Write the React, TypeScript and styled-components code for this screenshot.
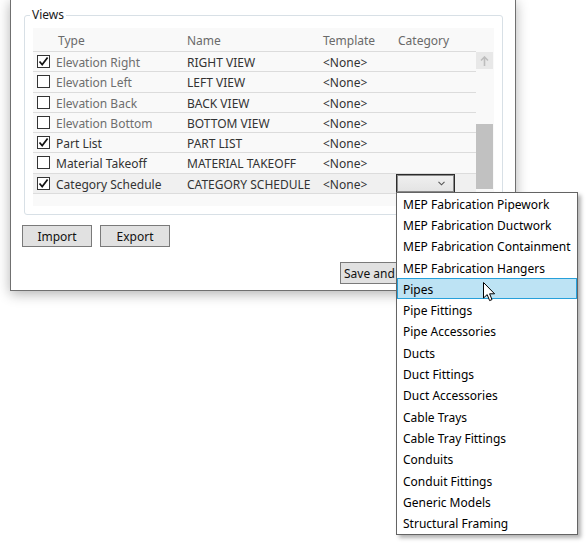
import React from 'react';
import styled, { createGlobalStyle } from 'styled-components';

const Global = createGlobalStyle`
  html, body { margin: 0; padding: 0; background: #fff; }
  body { font-family: "Noto Sans", "Segoe UI", sans-serif; font-size: 12px; color: #000; }
`;

const Page = styled.div`
  position: relative;
  width: 587px;
  height: 544px;
  overflow: hidden;
  background: #fff;
`;

const Dialog = styled.div`
  box-sizing: border-box;
  margin-left: 10px;
  margin-top: -1px;
  width: 506px;
  height: 292px;
  border: 1px solid #707070;
  background: #fff;
  box-shadow: 0 3px 12px rgba(0, 0, 0, 0.3);
  padding: 8px 12px 0 13px;
  display: flex;
  flex-direction: column;
`;

const GroupBox = styled.div`
  position: relative;
  margin-top: 7px;
  border: 1px solid #d8e0e6;
  border-radius: 3px;
  padding: 12px 8px 8px 8px;
`;

const Legend = styled.span`
  position: absolute;
  top: -9px;
  left: 5px;
  padding: 0 2px;
  background: #fff;
  line-height: 16px;
  color: #1a1a1a;
`;

const TableArea = styled.div`
  display: flex;
  height: 178px;
  background: #f9f9f9;
`;

const Grid = styled.div`
  width: 443px;
  display: grid;
  grid-template-columns: 23px 131px 136px 75px 78px;
  grid-auto-rows: min-content;
  align-content: start;
`;

const HeadCell = styled.div<{ $shift?: number }>`
  box-sizing: border-box;
  height: 24px;
  padding-top: 2px;
  border-bottom: 1px solid #dcdcdc;
  display: flex;
  align-items: center;
  padding-left: ${(p) => p.$shift ?? 0}px;
  color: #6a6a6a;
`;

const Cell = styled.div<{ $muted?: boolean; $selected?: boolean }>`
  box-sizing: border-box;
  height: 20.25px;
  padding-top: 2px;
  border-bottom: 1px solid #dcdcdc;
  display: flex;
  align-items: center;
  white-space: nowrap;
  color: ${(p) => (p.$muted ? '#6e6e6e' : '#333')};
  background: ${(p) => (p.$selected ? '#f0f0f0' : 'transparent')};
`;

const CheckCell = styled(Cell)`
  padding-left: 4px;
  padding-top: 0;
`;

const Box = styled.span`
  box-sizing: border-box;
  width: 13px;
  height: 13px;
  border: 1px solid #333;
  background: #fff;
  display: flex;
  align-items: center;
  justify-content: center;
`;

const ComboCell = styled(Cell)`
  padding-top: 0;
  align-items: flex-end;
`;

const Combo = styled.div`
  box-sizing: border-box;
  width: 59px;
  height: 19px;
  margin-left: -2px;
  border: 1px solid #2b2b2b;
  box-shadow: inset 0 0 0 1px #8a8a8a;
  background: linear-gradient(#f0f0f0, #e3e3e3);
  display: flex;
  align-items: center;
  justify-content: flex-end;
  padding-right: 9px;
`;

const ScrollCol = styled.div`
  width: 17px;
  display: flex;
  flex-direction: column;
`;

const ScrollSpacer = styled.div`
  height: 24px;
`;

const ScrollBtn = styled.div`
  height: 17px;
  background: #e8e8e8;
  display: flex;
  align-items: center;
  justify-content: center;
`;

const Track = styled.div<{ $offset: number }>`
  flex: 1;
  padding-top: ${(p) => p.$offset}px;
`;

const Thumb = styled.div`
  height: 65px;
  background: #c1c1c1;
`;

const ButtonRow = styled.div`
  display: flex;
  gap: 8px;
  margin-top: 10px;
  margin-left: -2px;
`;

const Button = styled.div<{ $w: number }>`
  box-sizing: border-box;
  width: ${(p) => p.$w}px;
  height: 22px;
  border: 1px solid #7a7a7a;
  background: #e1e1e1;
  display: flex;
  align-items: center;
  justify-content: center;
  color: #111;
  white-space: nowrap;
  overflow: hidden;
`;

const Footer = styled.div`
  display: flex;
  margin-top: 15px;
  margin-left: 316px;
`;

const SaveButton = styled(Button)`
  justify-content: flex-start;
  padding-left: 3px;
`;

const ClipLabel = styled.span`
  display: block;
  width: 52px;
  overflow: hidden;
  white-space: nowrap;
`;

const Dropdown = styled.div`
  position: absolute;
  left: 396px;
  top: 192px;
  width: 182px;
  box-sizing: border-box;
  border: 1px solid #646464;
  background: #fff;
  box-shadow: 3px 3px 4px rgba(0, 0, 0, 0.3);
  display: flex;
  flex-direction: column;
`;

const Item = styled.div<{ $hot?: boolean }>`
  box-sizing: border-box;
  height: 21.3px;
  padding-top: 1px;
  display: flex;
  align-items: center;
  padding-left: 5px;
  white-space: nowrap;
  color: #000;
  background: ${(p) => (p.$hot ? '#bde3f4' : 'transparent')};
  border: 1px solid ${(p) => (p.$hot ? '#26a0da' : 'transparent')};
`;

const Cursor = styled.svg`
  position: absolute;
  left: 483px;
  top: 282px;
`;

const rows = [
  { checked: true, type: 'Elevation Right', name: 'RIGHT VIEW', muted: true },
  { checked: false, type: 'Elevation Left', name: 'LEFT VIEW', muted: true },
  { checked: false, type: 'Elevation Back', name: 'BACK VIEW', muted: true },
  { checked: false, type: 'Elevation Bottom', name: 'BOTTOM VIEW', muted: true },
  { checked: true, type: 'Part List', name: 'PART LIST', muted: false },
  { checked: false, type: 'Material Takeoff', name: 'MATERIAL TAKEOFF', muted: false },
  { checked: true, type: 'Category Schedule', name: 'CATEGORY SCHEDULE', muted: false, selected: true },
];

const items = [
  'MEP Fabrication Pipework',
  'MEP Fabrication Ductwork',
  'MEP Fabrication Containment',
  'MEP Fabrication Hangers',
  'Pipes',
  'Pipe Fittings',
  'Pipe Accessories',
  'Ducts',
  'Duct Fittings',
  'Duct Accessories',
  'Cable Trays',
  'Cable Tray Fittings',
  'Conduits',
  'Conduit Fittings',
  'Generic Models',
  'Structural Framing',
];

const Check = () => (
  <svg width="11" height="11" viewBox="0 0 11 11">
    <path d="M1.5 5.5 L4.2 8.6 L9.6 1.6" fill="none" stroke="#111" strokeWidth="1.7" />
  </svg>
);

export default function App() {
  return (
    <Page>
      <Global />
      <Dialog>
        <GroupBox>
          <Legend>Views</Legend>
          <TableArea>
            <Grid>
              <HeadCell />
              <HeadCell $shift={2}>Type</HeadCell>
              <HeadCell $shift={-2}>Name</HeadCell>
              <HeadCell $shift={-1}>Template</HeadCell>
              <HeadCell>Category</HeadCell>
              {rows.map((r) => (
                <React.Fragment key={r.type}>
                  <CheckCell $selected={r.selected}>
                    <Box>{r.checked && <Check />}</Box>
                  </CheckCell>
                  <Cell $muted={r.muted} $selected={r.selected}>{r.type}</Cell>
                  <Cell $selected={r.selected}>{r.name}</Cell>
                  <Cell $selected={r.selected}>&lt;None&gt;</Cell>
                  <ComboCell $selected={r.selected}>
                    {r.selected && (
                      <Combo>
                        <svg width="7" height="5" viewBox="0 0 7 5">
                          <path d="M0.5 0.8 L3.5 3.8 L6.5 0.8" fill="none" stroke="#555" strokeWidth="1.1" />
                        </svg>
                      </Combo>
                    )}
                  </ComboCell>
                </React.Fragment>
              ))}
            </Grid>
            <ScrollCol>
              <ScrollSpacer />
              <ScrollBtn>
                <svg width="9" height="10" viewBox="0 0 9 10">
                  <path d="M4.5 1 L4.5 10 M1 4.5 L4.5 1 L8 4.5" fill="none" stroke="#bdbdbd" strokeWidth="1.6" />
                </svg>
              </ScrollBtn>
              <Track $offset={55}>
                <Thumb />
              </Track>
            </ScrollCol>
          </TableArea>
        </GroupBox>
        <ButtonRow>
          <Button $w={70}>Import</Button>
          <Button $w={70}>Export</Button>
        </ButtonRow>
        <Footer>
          <SaveButton $w={57}>
            <ClipLabel>Save and close</ClipLabel>
          </SaveButton>
        </Footer>
      </Dialog>
      <Dropdown>
        {items.map((it) => (
          <Item key={it} $hot={it === 'Pipes'}>{it}</Item>
        ))}
      </Dropdown>
      <Cursor width="13" height="20" viewBox="0 0 13 20">
        <path d="M0.5 0.5 L0.5 16 L4.2 12.6 L6.6 18.6 L9 17.6 L6.6 11.8 L11.6 11.8 Z" fill="#fff" stroke="#000" strokeWidth="1" strokeLinejoin="miter" />
      </Cursor>
    </Page>
  );
}
